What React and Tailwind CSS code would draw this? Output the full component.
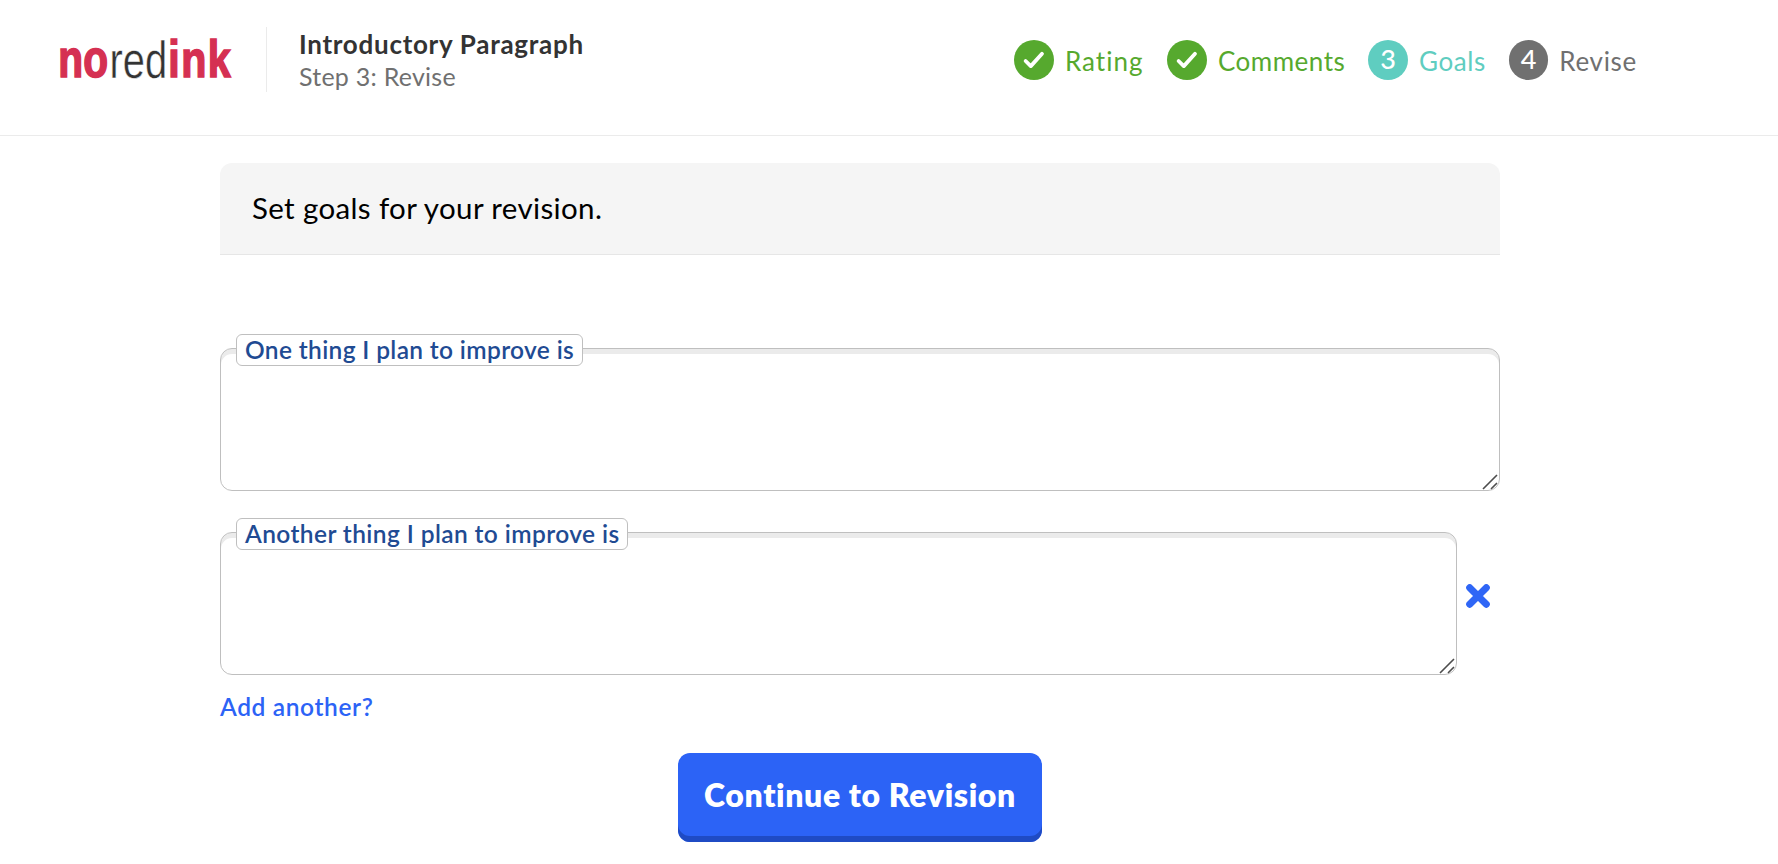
function Logo() {
  return (
    <svg className="h-[72px] w-[188px] shrink-0 overflow-visible" viewBox="53 24 188 72" role="img" aria-label="noredink">
      <g fontSize="51.5" fontFamily="'Liberation Sans', sans-serif">
        <text transform="translate(58.3 77.4) scale(0.79 1)" fontWeight="700" fill="#d53052" stroke="#d53052" strokeWidth="1.6">no</text>
        <text transform="translate(109.4 77.7) scale(0.775 1)" fill="#333333" stroke="#ffffff" strokeWidth="0.45">red</text>
        <text transform="translate(168.3 77.4) scale(0.8 1)" letterSpacing="1.8" fontWeight="700" fill="#d53052" stroke="#d53052" strokeWidth="1.6">ink</text>
      </g>
    </svg>
  );
}

function CheckMark() {
  return (
    <svg className="size-10" viewBox="0 0 40 40" fill="none" stroke="currentColor" strokeWidth="3.8" strokeLinecap="round" strokeLinejoin="round">
      <path d="m11.6 21 5.2 5.1 11.2-12.3" />
    </svg>
  );
}

function Step({ number, circle, className, children }) {
  return (
    <li className={`flex h-10 items-center text-[26px] leading-[40px] ${className}`}>
      <span className={`mr-[11px] flex size-10 items-center justify-center rounded-full text-[27px] leading-[40px] font-medium tracking-normal text-white ${circle}`}>
        {number ? <span className="pb-0.5">{number}</span> : <CheckMark />}
      </span>
      <span className="pt-0.5">{children}</span>
    </li>
  );
}

function GoalField({ label, labelClass, className }) {
  return (
    <div className={`relative h-[143px] ${className}`}>
      <textarea
        aria-label={label}
        className="block h-full w-full resize-none rounded-xl border border-[#bfbfbf] bg-white shadow-[inset_0_5px_0_0_#ebebeb] outline-none"
      />
      <span className={`absolute -top-[14px] left-4 flex h-8 items-center whitespace-nowrap rounded-md border border-[#bfbfbf] bg-white pl-2 text-[24.5px] leading-[30px] font-semibold text-[#1f4b93] ${labelClass}`}>
        {label}
      </span>
      <svg className="absolute right-[2px] bottom-[1px] h-4 w-4" viewBox="0 0 16 16" fill="none" stroke="#4d4d4d" strokeWidth="1.6">
        <path d="M1 15 15 1M9 15l6-6" />
      </svg>
    </div>
  );
}

export default function App() {
  return (
    <div className="h-[864px] overflow-hidden bg-white font-['Lato',sans-serif]">
      <header className="flex h-[136px] items-start border-b border-[#ebebeb] pl-[53px]">
        <div className="mt-6">
          <Logo />
        </div>
        <div className="mt-[27px] ml-[25px] h-[65px] border-l border-[#ebebeb] pl-8">
          <h1 className="text-[26px] leading-[34px] font-bold tracking-[0.72px] text-[#333333]">Introductory Paragraph</h1>
          <p className="text-[25px] leading-[31px] tracking-[0.25px] text-[#707070]">Step 3: Revise</p>
        </div>
        <ol className="mt-10 mr-[141px] ml-auto flex">
          <Step circle="bg-[#56a92e]" className="w-[153px] tracking-[1px] text-[#56a92e]">Rating</Step>
          <Step circle="bg-[#56a92e]" className="w-[201px] tracking-[0.5px] text-[#56a92e]">Comments</Step>
          <Step number={3} circle="bg-[#5fcdc0]" className="w-[141px] tracking-[0.6px] text-[#5fcdc0]">Goals</Step>
          <Step number={4} circle="bg-[#707070]" className="w-[128px] tracking-[0.7px] text-[#707070]">Revise</Step>
        </ol>
      </header>

      <main className="ml-[220px] flex w-[1280px] flex-col pt-[27px]">
        <h2 className="flex h-[92px] items-center rounded-t-xl border-b border-[#e6e6e6] bg-[#f5f5f5] pl-8 text-[29.5px] tracking-[0.36px] text-black">
          Set goals for your revision.
        </h2>
        <GoalField label="One thing I plan to improve is" labelClass="w-[347px] tracking-[0.35px]" className="mt-[93px] w-full" />
        <div className="mt-[41px] flex items-center">
          <GoalField label="Another thing I plan to improve is" labelClass="w-[392px] tracking-[0.4px]" className="w-[1237px]" />
          <button aria-label="Remove" className="mt-[-15px] ml-[9px]">
            <svg className="size-6" viewBox="0 0 24 24" stroke="#2f66f6" strokeWidth="7" strokeLinecap="round">
              <path d="m3.7 3.7 16.6 16.6M20.3 3.7 3.7 20.3" />
            </svg>
          </button>
        </div>
        <button className="mt-4 self-start text-[24.5px] leading-8 font-semibold tracking-[0.62px] text-[#2c63f6]">Add another?</button>
        <button className="mt-[30px] h-[89px] w-[364px] self-center rounded-xl bg-[#2c63f6] pb-1.5 text-[32px] font-extrabold tracking-[0.62px] text-white shadow-[inset_0_-6px_0_0_#1f4bc4]">
          Continue to Revision
        </button>
      </main>
    </div>
  );
}
